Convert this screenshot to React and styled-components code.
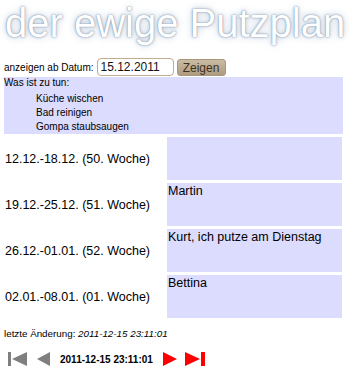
import React from "react";
import styled, { createGlobalStyle } from "styled-components";

const Global = createGlobalStyle`
  html, body { margin: 0; padding: 0; background: #fff; }
  body { font-family: "Liberation Sans", Arial, sans-serif; color: #000; }
`;

const Page = styled.div`
  width: 350px;
  padding: 0 4px;
  box-sizing: border-box;
`;

const Title = styled.h1`
  margin: 0;
  padding-left: 1px;
  font-size: 40px;
  line-height: 46px;
  font-weight: normal;
  color: #fff;
  white-space: nowrap;
  text-shadow: 0 0 1px #6f86a0, 0 0 3px #98aac0, 0 0 8px #bccadb;
  height: 57px;
`;

const DateRow = styled.form`
  display: flex;
  align-items: center;
  height: 20px;
  font-size: 10px;
`;

const Label = styled.span`
  margin-right: 3px;
`;

const DateInput = styled.input`
  box-sizing: border-box;
  width: 77px;
  height: 18px;
  margin: 0;
  padding: 0 3px;
  border: 1px solid #c2ad8c;
  border-radius: 4px;
  font-family: "Liberation Sans", Arial, sans-serif;
  font-size: 12px;
  color: #111;
  background: #fff;
  outline: none;
`;

const Button = styled.button`
  box-sizing: border-box;
  width: 49px;
  height: 17px;
  margin: 1px 0 0 3px;
  padding: 0;
  border: 1px solid #a9977c;
  border-radius: 3px;
  background: linear-gradient(#cbbba3, #ad9c82);
  font-family: "Liberation Sans", Arial, sans-serif;
  font-size: 12px;
  color: #3f3122;
`;

const TodoBox = styled.div`
  background: #dcdcfe;
  height: 57px;
  margin-right: 3px;
  font-size: 10px;
`;

const TodoHead = styled.div`
  line-height: 12px;
  height: 12px;
`;

const TodoList = styled.ul`
  list-style: none;
  margin: 3px 0 0;
  padding: 0 0 0 32px;
`;

const TodoItem = styled.li`
  line-height: 14px;
  height: 14px;
`;

const Weeks = styled.div`
  display: flex;
  flex-direction: column;
  gap: 3px;
  margin-top: 3px;
`;

const WeekRow = styled.div`
  display: grid;
  grid-template-columns: 163px 175px;
  height: 43px;
`;

const WeekLabel = styled.div`
  display: flex;
  align-items: center;
  padding-left: 1px;
  font-size: 12.5px;
  white-space: nowrap;
`;

const WeekCell = styled.div`
  background: #dcdcfe;
  font-size: 12.5px;
  line-height: 15px;
  padding: 1px 0 0 1px;
`;

const LastChange = styled.div`
  margin-top: 10px;
  font-size: 9.8px;
  line-height: 12px;
  white-space: nowrap;
  em { font-style: italic; }
`;

const Nav = styled.div`
  display: flex;
  align-items: center;
  margin-top: 12px;
  padding-left: 4px;
  height: 14px;
`;

const NavIcon = styled.svg`
  display: block;
  flex: none;
  margin-right: ${(p) => p.$gap}px;
`;

const NavDate = styled.b`
  font-size: 10px;
  font-weight: bold;
  white-space: nowrap;
  margin-right: 10px;
`;

const weeks = [
  ["12.12.-18.12. (50. Woche)", ""],
  ["19.12.-25.12. (51. Woche)", "Martin"],
  ["26.12.-01.01. (52. Woche)", "Kurt, ich putze am Dienstag"],
  ["02.01.-08.01. (01. Woche)", "Bettina"],
];

export default function App() {
  return (
    <Page>
      <Global />
      <Title>der ewige Putzplan</Title>
      <DateRow onSubmit={(e) => e.preventDefault()}>
        <Label>anzeigen ab Datum:</Label>
        <DateInput defaultValue="15.12.2011" />
        <Button type="submit">Zeigen</Button>
      </DateRow>
      <TodoBox>
        <TodoHead>Was ist zu tun:</TodoHead>
        <TodoList>
          <TodoItem>Küche wischen</TodoItem>
          <TodoItem>Bad reinigen</TodoItem>
          <TodoItem>Gompa staubsaugen</TodoItem>
        </TodoList>
      </TodoBox>
      <Weeks>
        {weeks.map(([w, who]) => (
          <WeekRow key={w}>
            <WeekLabel>{w}</WeekLabel>
            <WeekCell>{who}</WeekCell>
          </WeekRow>
        ))}
      </Weeks>
      <LastChange>
        letzte Änderung: <em>2011-12-15 23:11:01</em>
      </LastChange>
      <Nav>
        <NavIcon $gap={9} width="20" height="14" viewBox="0 0 20 14">
          <rect x="0" y="0" width="3" height="14" fill="#7f7f7f" />
          <polygon points="19,0 19,14 4,7" fill="#7f7f7f" />
        </NavIcon>
        <NavIcon $gap={9} width="14" height="14" viewBox="0 0 14 14">
          <polygon points="13,0 13,14 0,7" fill="#7f7f7f" />
        </NavIcon>
        <NavDate>2011-12-15 23:11:01</NavDate>
        <NavIcon $gap={8} width="14" height="14" viewBox="0 0 14 14">
          <polygon points="0,0 0,14 14,7" fill="#ff0000" />
        </NavIcon>
        <NavIcon $gap={0} width="20" height="14" viewBox="0 0 20 14">
          <polygon points="0,0 0,14 15,7" fill="#ff0000" />
          <rect x="16" y="0" width="4" height="14" fill="#ff0000" />
        </NavIcon>
      </Nav>
    </Page>
  );
}
